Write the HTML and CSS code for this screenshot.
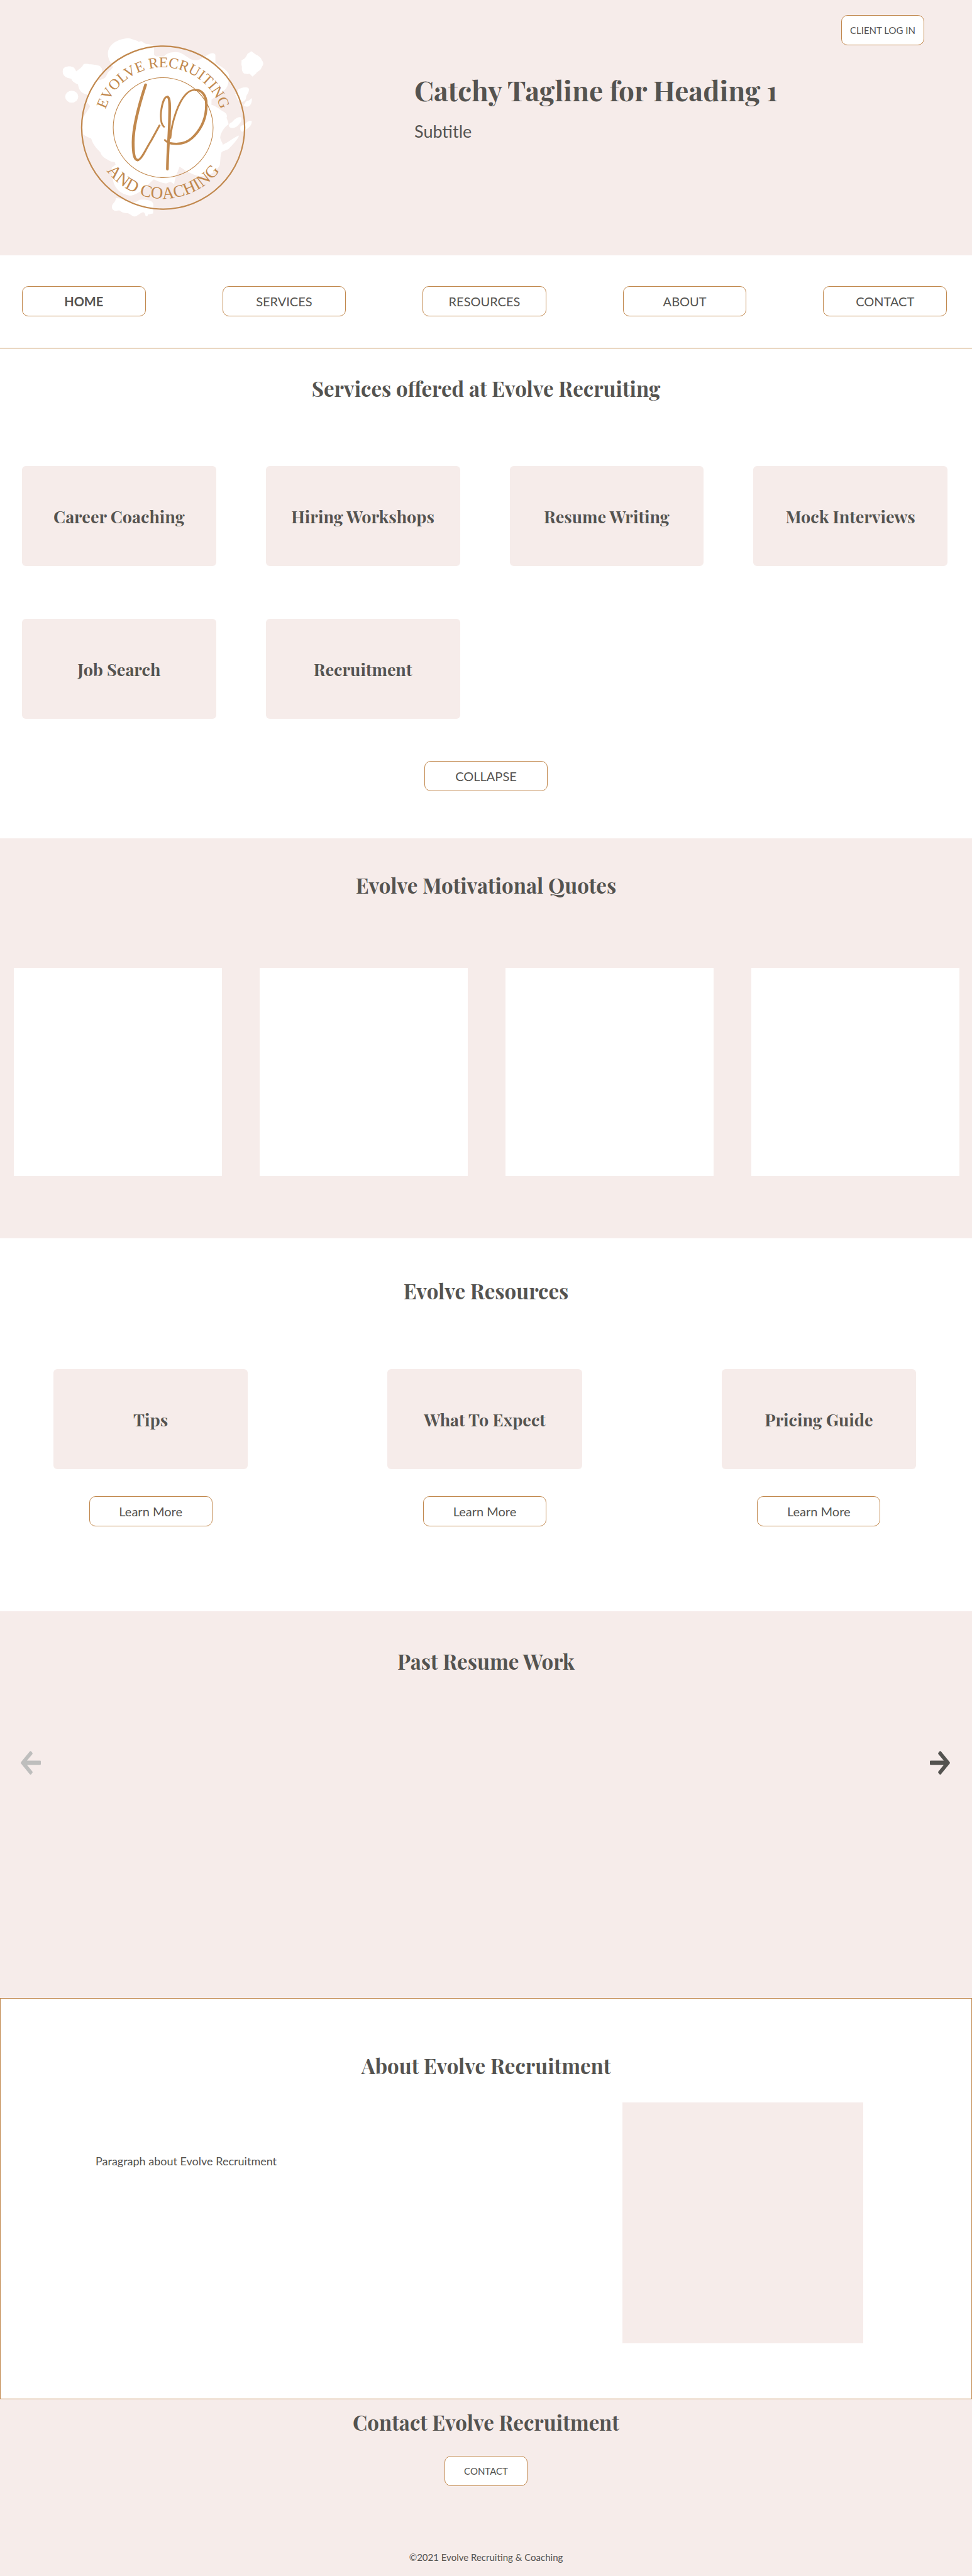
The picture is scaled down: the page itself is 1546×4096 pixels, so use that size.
FILE: index.html
```html
<!DOCTYPE html>
<html lang="en">
<head>
<meta charset="utf-8">
<meta name="viewport" content="width=device-width, initial-scale=1">
<title>Evolve Recruiting and Coaching</title>
<link rel="stylesheet" href="styles.css">
</head>
<body>
<header class="hero">
  <svg class="logo" viewBox="0 0 640 560" role="img" aria-label="Evolve Recruiting and Coaching">
    <defs>
      <path id="arc-top" d="M146 288A174 174 0 0 1 494 288"/>
      <path id="arc-bottom" d="M115 288A205 205 0 0 0 525 288"/>
    </defs>
    <g transform="scale(.408163 .357143)">
      <!-- paint splashes -->
      <g fill="#fff">
        <path d="M410 275C370 200 400 100 535 85C560 88 590 105 605 107L612 115L628 107C645 115 655 130 668 132C690 133 705 140 720 150L720 220L735 232L790 232C810 205 840 198 872 197C905 197 920 212 940 225C965 240 975 262 1015 262C1050 260 1070 235 1090 225C1120 205 1140 195 1153 218L1153 285C1180 305 1215 325 1228 345C1258 375 1250 400 1246 425C1244 470 1230 500 1200 515C1180 530 1165 550 1145 565L1126 580L1125 622C1160 635 1185 660 1205 675C1235 690 1238 710 1232 728C1238 745 1245 765 1246 780C1215 800 1190 850 1187 885C1190 915 1205 925 1205 945C1250 920 1290 880 1320 870C1310 905 1270 950 1245 980C1220 995 1200 995 1195 1010C1185 1050 1190 1090 1182 1115C1150 1170 1110 1195 1050 1200C1000 1195 950 1160 900 1122C885 1170 870 1200 862 1262L835 1243L805 1258C770 1250 745 1240 718 1225C690 1250 670 1280 645 1305C610 1330 580 1355 545 1355C490 1345 440 1300 430 1235L420 1130L448 1105L442 1085L415 1080C385 1060 350 1045 340 1005C300 960 290 940 275 895C250 880 230 875 215 855L215 745C225 700 255 670 268 633L245 600L250 540C200 530 190 500 182 458C150 440 140 430 135 412C90 405 70 380 75 345C75 310 130 305 150 320C165 335 165 345 170 352C195 330 210 320 218 300C230 285 250 295 275 296C300 298 320 305 335 308C355 325 355 345 350 365L320 425C345 420 370 415 380 395C390 375 395 350 410 345L430 320Z"/>
        <ellipse cx="138" cy="557" rx="46" ry="48"/>
        <path d="M1408 190L1425 205C1450 225 1475 235 1480 260C1500 290 1490 300 1478 325C1470 350 1450 350 1440 370L1415 395L1395 372C1380 375 1350 375 1345 355C1335 330 1345 320 1337 300L1338 262C1365 250 1370 235 1380 210Z"/>
        <path d="M1312 500C1340 480 1385 470 1390 495C1392 530 1370 540 1370 565C1365 600 1340 605 1320 590C1300 570 1305 550 1290 535C1305 530 1318 520 1312 500Z"/>
        <path d="M1410 568C1415 600 1400 635 1380 637C1360 637 1345 625 1355 620C1365 610 1365 595 1380 590C1395 588 1400 575 1410 568Z"/>
        <path d="M1337 728C1340 760 1320 785 1300 800C1280 812 1262 812 1252 802C1245 790 1250 775 1262 768C1280 755 1285 740 1305 728C1320 720 1332 720 1337 728Z"/>
        <path d="M1410 752C1412 790 1385 810 1365 825L1345 840C1330 840 1325 815 1332 792C1360 785 1370 770 1378 760C1390 750 1405 750 1410 752Z"/>
        <path d="M450 1375C490 1375 530 1395 560 1405C580 1420 600 1405 615 1390C660 1385 715 1390 715 1430L713 1500C700 1500 690 1508 680 1505L670 1524L658 1515C655 1490 645 1485 630 1495C615 1505 600 1520 585 1524C560 1520 555 1505 535 1497C510 1500 490 1490 475 1475C450 1480 425 1480 422 1450C418 1420 450 1410 450 1375Z"/>
      </g>
      <!-- brush monogram -->
      <g fill="none" stroke="#c1884d" stroke-linecap="round" stroke-linejoin="round">
        <path stroke-width="20" d="M660 460C620 600 572 780 572 925C572 1010 580 1068 604 1068"/>
        <path stroke-width="14" d="M604 1070C635 1062 660 980 700 910L758 789"/>
        <path stroke-width="13" d="M790 800C768 780 766 720 769 680C777 605 795 556 815 556"/>
        <path stroke-width="19" d="M816 560C834 565 830 660 829 730C828 850 815 1000 814 1142"/>
        <path stroke-width="13" d="M835 890C845 760 890 600 945 537C970 508 995 500 1015 503"/>
        <path stroke-width="18" d="M1015 504C1055 502 1080 540 1088 590C1095 690 1075 770 1025 845C975 920 920 948 840 934"/>
        <path stroke-width="13" d="M840 934C815 926 802 916 796 906"/>
      </g>
    </g>
    <g fill="none" stroke="#c1884d">
      <circle cx="320" cy="288" r="235" stroke-width="4"/>
      <circle cx="320" cy="288" r="144" stroke-width="2"/>
    </g>
    <g class="logo-text" text-anchor="middle">
      <text font-size="43"><textPath href="#arc-top" startOffset="50%">EVOLVE RECRUITING</textPath></text>
      <text font-size="49"><textPath href="#arc-bottom" startOffset="50%">AND COACHING</textPath></text>
    </g>
  </svg>
  <div class="hero-text">
    <h1>Catchy Tagline for Heading 1</h1>
    <p>Subtitle</p>
  </div>
  <button class="btn btn-small" type="button">CLIENT LOG IN</button>
</header>

<nav class="nav" aria-label="Main">
  <a class="btn current" href="#" aria-current="page">HOME</a>
  <a class="btn" href="#services">SERVICES</a>
  <a class="btn" href="#resources">RESOURCES</a>
  <a class="btn" href="#about">ABOUT</a>
  <a class="btn" href="#contact">CONTACT</a>
</nav>

<main>
  <section class="services" id="services">
    <h2>Services offered at Evolve Recruiting</h2>
    <div class="service-grid">
      <h3 class="card">Career Coaching</h3>
      <h3 class="card">Hiring Workshops</h3>
      <h3 class="card">Resume Writing</h3>
      <h3 class="card">Mock Interviews</h3>
      <h3 class="card">Job Search</h3>
      <h3 class="card">Recruitment</h3>
    </div>
    <button class="btn" type="button">COLLAPSE</button>
  </section>

  <section class="quotes">
    <h2>Evolve Motivational Quotes</h2>
    <div class="quote-grid">
      <div class="quote"></div>
      <div class="quote"></div>
      <div class="quote"></div>
      <div class="quote"></div>
    </div>
  </section>

  <section class="resources" id="resources">
    <h2>Evolve Resources</h2>
    <div class="resource-grid">
      <article class="resource">
        <h3 class="card">Tips</h3>
        <a class="btn" href="#">Learn More</a>
      </article>
      <article class="resource">
        <h3 class="card">What To Expect</h3>
        <a class="btn" href="#">Learn More</a>
      </article>
      <article class="resource">
        <h3 class="card">Pricing Guide</h3>
        <a class="btn" href="#">Learn More</a>
      </article>
    </div>
  </section>

  <section class="past">
    <h2>Past Resume Work</h2>
    <div class="carousel">
      <button class="arrow" type="button" aria-label="Previous" disabled>
        <svg class="flip" viewBox="534 277 175 204" preserveAspectRatio="none"><path d="M534 367Q534 360 542 360H655L608 305Q604 299 608 293L618 281Q624 275 630 281L706 372Q711 379 706 386L630 477Q624 483 618 477L608 465Q604 459 608 453L655 397H542Q534 397 534 390Z"/></svg>
      </button>
      <button class="arrow" type="button" aria-label="Next">
        <svg viewBox="534 277 175 204" preserveAspectRatio="none"><path d="M534 367Q534 360 542 360H655L608 305Q604 299 608 293L618 281Q624 275 630 281L706 372Q711 379 706 386L630 477Q624 483 618 477L608 465Q604 459 608 453L655 397H542Q534 397 534 390Z"/></svg>
      </button>
    </div>
  </section>

  <section class="about" id="about">
    <h2>About Evolve Recruitment</h2>
    <div class="about-body">
      <p>Paragraph about Evolve Recruitment</p>
      <div class="about-picture"></div>
    </div>
  </section>
</main>

<footer class="footer" id="contact">
  <h2>Contact Evolve Recruitment</h2>
  <button class="btn btn-small" type="button">CONTACT</button>
  <p>©2021 Evolve Recruiting &amp; Coaching</p>
</footer>
</body>
</html>
```
FILE: styles.css
```css
:root {
  --blush: #f6ecea;
  --ink: #545350;
  --gold: #c1884d;
  --serif: "Playfair Display", "Liberation Serif", serif;
}

* {
  box-sizing: border-box;
}

body {
  margin: 0;
  background: #fff;
  color: var(--ink);
  font-family: Lato, sans-serif;
  font-size: 18px;
}

h1, h2, h3, p {
  margin: 0;
}

h1, h2, h3 {
  font-family: var(--serif);
  font-weight: 700;
}

h1 {
  font-size: 44px;
  line-height: 56px;
}

h2 {
  font-size: 33px;
  line-height: 40px;
  text-align: center;
}

h3 {
  font-size: 27px;
  line-height: 36px;
}

.btn {
  display: flex;
  align-items: center;
  justify-content: center;
  width: 196px;
  height: 48px;
  padding: 0;
  border: 1px solid var(--gold);
  border-radius: 10px;
  background: #fff;
  color: var(--ink);
  font-family: inherit;
  font-size: 20px;
  text-decoration: none;
}

.btn-small {
  width: 132px;
  font-size: 15px;
}

.card {
  display: flex;
  align-items: center;
  justify-content: center;
  height: 159px;
  border-radius: 6px;
  background: var(--blush);
}

/* Header */
.hero {
  display: flex;
  align-items: flex-start;
  padding: 24px 76px 53px 83px;
  background: var(--blush);
}

.logo {
  width: 353px;
  height: 309px;
  margin-top: 20px;
}

.logo-text {
  fill: var(--gold);
  font-family: "Liberation Serif", serif;
}

.hero-text {
  flex: 1;
  padding: 91px 0 0 223px;
}

.hero-text p {
  margin-top: 20px;
  font-size: 27px;
  line-height: 36px;
}

.nav {
  display: grid;
  grid-template-columns: repeat(5, 1fr);
  column-gap: 122px;
  padding: 49px 40px 50px 35px;
  border-bottom: 1px solid var(--gold);
}

.nav .btn {
  width: auto;
}

.current {
  font-weight: 700;
}

/* Services */
.services {
  padding: 43px 0 75px;
}

.service-grid {
  display: grid;
  grid-template-columns: repeat(4, 1fr);
  gap: 84px 79px;
  margin: 104px 0 67px;
  padding: 0 39px 0 35px;
}

.services > .btn {
  margin: 0 auto;
}

/* Quotes */
.quotes {
  padding: 54px 0 99px;
  background: var(--blush);
}

.quote-grid {
  display: grid;
  grid-template-columns: repeat(4, 1fr);
  gap: 60px;
  margin-top: 112px;
  padding: 0 20px 0 22px;
}

.quote {
  aspect-ratio: 1;
  background: #fff;
}

/* Resources */
.resources {
  padding: 63px 0 135px;
}

.resource-grid {
  display: grid;
  grid-template-columns: repeat(3, 1fr);
  gap: 222px;
  margin-top: 105px;
  padding: 0 89px 0 85px;
}

.resource .card {
  margin-bottom: 43px;
}

.resource .btn {
  margin: 0 auto;
}

/* Past work */
.past {
  padding: 59px 0 355px;
  background: var(--blush);
}

.carousel {
  display: flex;
  justify-content: space-between;
  margin-top: 123px;
  padding: 0 35px 0 33px;
}

.arrow {
  padding: 0;
  border: 0;
  background: none;
}

.arrow svg {
  display: block;
  width: 32px;
  height: 38px;
  fill: var(--ink);
}

.arrow:disabled svg {
  fill: #bebebd;
}

.flip {
  transform: scaleX(-1);
}

/* About */
.about {
  padding: 86px 0 88px;
  border: 1px solid var(--gold);
}

.about-body {
  display: flex;
  align-items: flex-start;
  justify-content: space-between;
  margin-top: 39px;
  padding: 0 172px 0 151px;
}

.about-body p {
  padding-top: 81px;
  line-height: 24px;
}

.about-picture {
  width: 383px;
  aspect-ratio: 1;
  background: var(--blush);
}

/* Footer */
.footer {
  padding: 16px 0 20px;
  background: var(--blush);
  text-align: center;
}

.footer .btn {
  margin: 34px auto 103px;
}

.footer p {
  font-size: 15px;
  line-height: 20px;
}
```
